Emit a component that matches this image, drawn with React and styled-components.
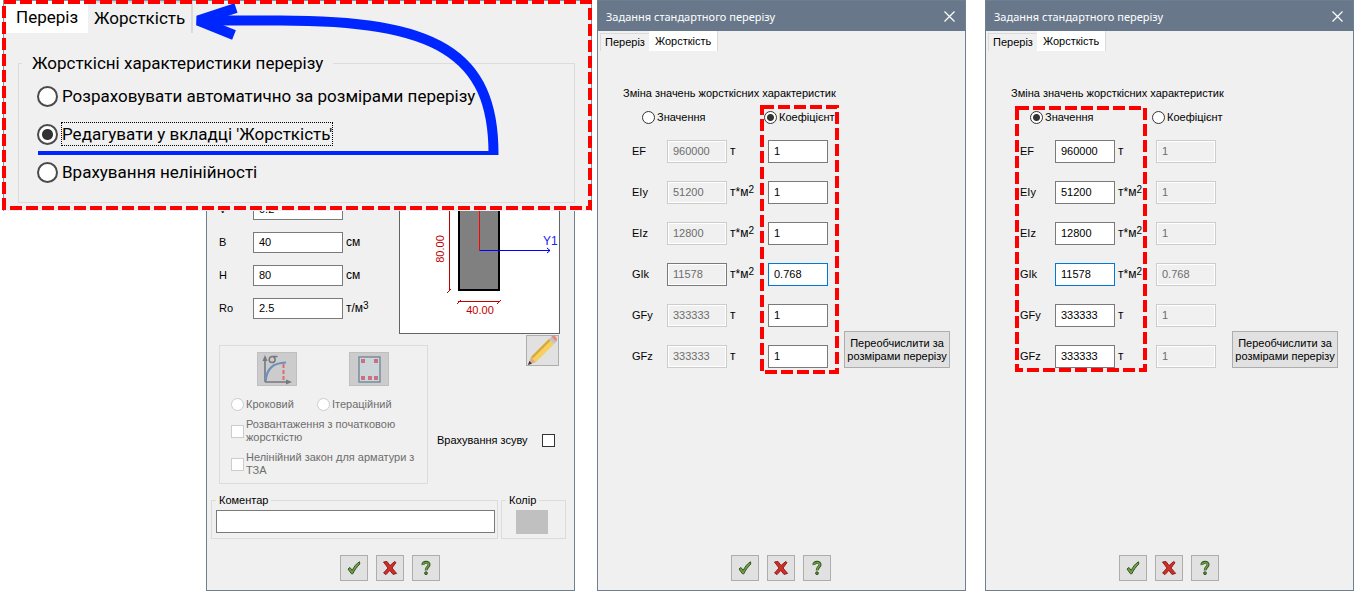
import React, { useState } from "react";
import styled, { createGlobalStyle } from "styled-components";

const ROWS = [
  { name: "EF", value: "960000", unit: "т", factor: "1" },
  { name: "EIy", value: "51200", unit: "т*м", power: "2", factor: "1" },
  { name: "EIz", value: "12800", unit: "т*м", power: "2", factor: "1" },
  { name: "GIk", value: "11578", unit: "т*м", power: "2", factor: "0.768" },
  { name: "GFy", value: "333333", unit: "т", factor: "1" },
  { name: "GFz", value: "333333", unit: "т", factor: "1" },
];

const SECTION = [
  { name: "V", value: "0.2" },
  { name: "B", value: "40", unit: "см" },
  { name: "H", value: "80", unit: "см" },
  { name: "Ro", value: "2.5", unit: "т/м", power: "3" },
];

const CheckIcon = () => (
  <svg width="14" height="14" viewBox="0 0 14 14">
    <path d="M1 8 L3 6.5 L5.2 9.5 C7 5.5 9.5 2.5 12.5 0.8 L12.8 3 C10 5.8 7.6 9 5.8 12.8 L4.5 12.8 Z" fill="#6fa04b" stroke="#35551f" strokeWidth="1" />
  </svg>
);

const CrossIcon = () => (
  <svg width="16" height="16" viewBox="0 0 16 16">
    <path d="M1.5 2 L5 1.5 L8 5.6 L12.6 1.5 L14 2.6 L10 8 L14.6 13.4 L11 14.4 L7.8 10.4 L4 14.6 L1.6 13 L6 8 Z" fill="#cf2f28" stroke="#8e1f1d" strokeWidth="1" />
  </svg>
);

const HelpIcon = () => (
  <svg width="12" height="16" viewBox="0 0 12 16">
    <path d="M3 5 C2.4 1.6 9.6 1.2 9 5 C8.7 7 6 7.4 6.2 10.4" fill="none" stroke="#35551f" strokeWidth="3" />
    <path d="M3 4.8 C2.6 2 9.2 1.6 8.8 5 C8.5 7 6 7.4 6.2 10" fill="none" stroke="#6fa04b" strokeWidth="1.4" />
    <circle cx="6" cy="13.2" r="1.4" fill="#5c8c3c" stroke="#35551f" />
  </svg>
);

const PencilIcon = () => (
  <svg width="31" height="31" viewBox="0 0 31 31">
    <path d="M1 30 L4 22 L9 27 Z" fill="#dcae8c" />
    <path d="M1 30 L2.4 26 L5 28.6 Z" fill="#333" />
    <path d="M4 22 L22 4 L27 9 L9 27 Z" fill="#f6cf5e" />
    <path d="M4 22 L22 4 L23.6 5.6 L5.6 23.6 Z" fill="#d9a63c" />
    <path d="M22 4 L24.4 1.8 L29.2 6.8 L27 9 Z" fill="#b9c6cc" />
    <path d="M24.4 1.8 Q26 0 28.6 1.6 Q31 4 29.2 6.8 Z" fill="#ee8776" />
  </svg>
);

const CurveIcon = () => (
  <svg width="38" height="32" viewBox="0 0 38 32">
    <path d="M7 29 V6 M7 29 H29" stroke="#777782" strokeWidth="1.6" fill="none" />
    <path d="M4.5 8 L7 2 L9.5 8 Z M28 26.5 L34 29 L28 31.5 Z" fill="#777782" />
    <path d="M7.5 28 C9 15 15 10 28 9.5" stroke="#6f8fbd" strokeWidth="2.2" fill="none" />
    <path d="M25.5 11 V28" stroke="#e06a6f" strokeWidth="2" strokeDasharray="4 2" />
    <path d="M19.5 3.5 H14 C10 4 10.5 9.5 14 9.5 C18 9.5 18 5 15 3.5" stroke="#77777a" strokeWidth="1.5" fill="none" />
  </svg>
);

const RebarIcon = () => (
  <svg width="38" height="32" viewBox="0 0 38 32">
    <rect x="9" y="4" width="21" height="25" fill="#ccd6d8" stroke="#71889a" strokeWidth="1.4" />
    <path d="M11 6h4v4h-4z M24 6h4v4h-4z M11 23h4v4h-4z M18 23h4v4h-4z M24 23h4v4h-4z" fill="#cc6f80" />
  </svg>
);

const CloseIcon = () => (
  <svg width="11" height="11" viewBox="0 0 11 11">
    <path d="M0.5 0.5 L10.5 10.5 M10.5 0.5 L0.5 10.5" stroke="#fff" strokeWidth="1.2" />
  </svg>
);

const SectionDrawing = () => (
  <Drawing viewBox="0 0 159 134" width="159" height="134">
    <g fontFamily="Liberation Sans, Arial, sans-serif" fontSize="12">
      <rect x="59" y="-20" width="40" height="111" fill="#808080" stroke="#000" strokeWidth="2" />
      <path d="M79.5 0 V51" stroke="#f00" />
      <path d="M79.5 51.5 H150 M147 49 L150 51.5 L147 54" stroke="#00f" fill="none" />
      <path d="M49.5 0 V92 M47 94 L51 90 M58 102.5 H100 M57 105 L61 101 M97 105 L101 101" stroke="#c00000" fill="none" />
      <text x="143" y="46" fill="#2020ff">Y1</text>
      <text x="80" y="115" textAnchor="middle" fontSize="11" fill="#c00000">40.00</text>
      <text x="44" y="50" textAnchor="middle" fontSize="11" fill="#c00000" transform="rotate(-90 44 50)">80.00</text>
    </g>
  </Drawing>
);

const Footer = () => (
  <Buttons>
    <IconButton aria-label="OK"><CheckIcon /></IconButton>
    <IconButton aria-label="Скасувати"><CrossIcon /></IconButton>
    <IconButton aria-label="Довідка"><HelpIcon /></IconButton>
  </Buttons>
);

const Unit = ({ unit, power }) => (
  <UnitText>
    {unit}
    {power && <sup>{power}</sup>}
  </UnitText>
);

const SectionDialog = () => (
  <Dialog>
    <SectionBody>
      <TopRow>
        <SectionFields>
          {SECTION.map((row) => (
            <React.Fragment key={row.name}>
              <label htmlFor={`section-${row.name}`}>{row.name}</label>
              <TextBox id={`section-${row.name}`} defaultValue={row.value} />
              <Unit unit={row.unit} power={row.power} />
            </React.Fragment>
          ))}
        </SectionFields>
        <Preview>
          <SectionDrawing />
        </Preview>
      </TopRow>
      <MiddleRow>
        <Nonlinear>
          <ModeButtons>
            <ModeButton disabled aria-label="Діаграма"><CurveIcon /></ModeButton>
            <ModeButton disabled aria-label="Армування"><RebarIcon /></ModeButton>
          </ModeButtons>
          <Methods>
            <Choice>
              <Radio name="method" disabled />
              Кроковий
            </Choice>
            <Choice>
              <Radio name="method" disabled />
              Ітераційний
            </Choice>
          </Methods>
          <Choice>
            <CheckBox disabled />
            Розвантаження з початковою жорсткістю
          </Choice>
          <Choice>
            <CheckBox disabled />
            Нелінійний закон для арматури з ТЗА
          </Choice>
        </Nonlinear>
        <SideColumn>
          <PencilButton aria-label="Редагувати"><PencilIcon /></PencilButton>
          <ShearLabel>
            Врахування зсуву
            <CheckBox />
          </ShearLabel>
        </SideColumn>
      </MiddleRow>
      <BottomRow>
        <CommentGroup>
          <legend>Коментар</legend>
          <CommentBox aria-label="Коментар" />
        </CommentGroup>
        <ColorGroup>
          <legend>Колір</legend>
          <Swatch aria-label="Колір" />
        </ColorGroup>
      </BottomRow>
    </SectionBody>
    <Footer />
  </Dialog>
);

const StiffnessDialog = ({ id, initial, children }) => {
  const [mode, setMode] = useState(initial);

  return (
    <Dialog>
      <TitleBar>
        Задання стандартного перерізу
        <CloseButton aria-label="Закрити"><CloseIcon /></CloseButton>
      </TitleBar>
      <Tabs>
        <Tab>Переріз</Tab>
        <Tab $active>Жорсткість</Tab>
      </Tabs>
      <Stiffness>
        <Heading>Зміна значень жорсткісних характеристик</Heading>
        <Modes>
          <Choice>
            <Radio name={id} checked={mode === "value"} onChange={() => setMode("value")} />
            Значення
          </Choice>
          <Choice>
            <Radio name={id} checked={mode === "factor"} onChange={() => setMode("factor")} />
            Коефіцієнт
          </Choice>
        </Modes>
        <FieldsRow>
          <Fields>
            {ROWS.map((row) => (
              <React.Fragment key={row.name}>
                <label htmlFor={`${id}-${row.name}`}>{row.name}</label>
                <TextBox
                  id={`${id}-${row.name}`}
                  defaultValue={row.value}
                  disabled={mode !== "value"}
                  $current={row.name === "GIk"}
                />
                <Unit unit={row.unit} power={row.power} />
                <TextBox
                  aria-label={`${row.name} коефіцієнт`}
                  defaultValue={row.factor}
                  disabled={mode !== "factor"}
                  $current={row.name === "GIk" && mode === "factor"}
                />
              </React.Fragment>
            ))}
          </Fields>
          <Recalculate>
            Переобчислити за
            <br />
            розмірами перерізу
          </Recalculate>
          {children}
        </FieldsRow>
      </Stiffness>
      <Footer />
    </Dialog>
  );
};

const App = () => {
  return (
    <Page>
      <GlobalStyle />
      <SectionDialog />
      <StiffnessDialog id="factor" initial="factor">
        <FactorFrame width="79" height="269">
          <DashedRect x="2" y="2" width="75" height="265" />
        </FactorFrame>
      </StiffnessDialog>
      <StiffnessDialog id="value" initial="value">
        <ValueFrame width="132" height="266">
          <DashedRect x="2" y="2" width="128" height="262" />
        </ValueFrame>
      </StiffnessDialog>
      <Callout>
        <Tabs>
          <BigTab $active>Переріз</BigTab>
          <BigTab>Жорсткість</BigTab>
        </Tabs>
        <BigGroup>
          <legend>Жорсткісні характеристики перерізу</legend>
          <BigChoice>
            <BigRadio name="kind" />
            <span>Розраховувати автоматично за розмірами перерізу</span>
          </BigChoice>
          <BigChoice $focused>
            <BigRadio name="kind" defaultChecked />
            <span>Редагувати у вкладці 'Жорсткість'</span>
          </BigChoice>
          <BigChoice>
            <BigRadio name="kind" />
            <span>Врахування нелінійності</span>
          </BigChoice>
        </BigGroup>
        <CalloutMarks width="592" height="211">
          <path d="M38 153 H494" stroke="#0026ff" strokeWidth="4" />
          <path d="M493.5 155 C494 52 435 20.5 280 20.5 H202" stroke="#0026ff" strokeWidth="10" fill="none" />
          <path d="M236 8 L198 20.5 L234 35" stroke="#0026ff" strokeWidth="10" strokeLinejoin="bevel" fill="none" />
          <DashedRect x="4" y="2" width="586" height="206" />
        </CalloutMarks>
      </Callout>
    </Page>
  );
};

export default App;

const GlobalStyle = createGlobalStyle`
  * {
    box-sizing: border-box;
  }

  body {
    margin: 0;
    background: #fff;
    color: #000;
    font: 11px/13px Tahoma, "Liberation Sans", sans-serif;
  }

  button,
  input {
    margin: 0;
    font: inherit;
  }

  svg {
    display: block;
  }
`;

const Page = styled.main`
  position: relative;
  display: flex;
  gap: 19px;
  padding-left: 206px;
  min-height: 100vh;
`;

const Dialog = styled.section`
  display: flex;
  flex: 1;
  flex-direction: column;
  border: 1px solid #6f7f92;
  background: #f0f0f0;

  &:first-of-type {
    margin-right: 3px;
  }
`;

const TitleBar = styled.header`
  display: flex;
  align-items: center;
  justify-content: space-between;
  height: 30px;
  padding: 0 10px 0 8px;
  background: #69778a;
  color: #fff;
  font-family: "Noto Sans", "Open Sans", sans-serif;
`;

const CloseButton = styled.button`
  padding: 0;
  border: 0;
  background: none;
`;

const Tabs = styled.nav`
  display: flex;
  align-items: flex-end;
  padding-left: 2px;
`;

const Tab = styled.button`
  height: ${(props) => (props.$active ? 20 : 18)}px;
  padding: 0 ${(props) => (props.$active ? 6 : 4)}px;
  border: 1px solid #dadada;
  border-width: ${(props) => (props.$active ? "0 1px 0 0" : "1px 0 0 1px")};
  background: ${(props) => (props.$active ? "#fff" : "#f0f0f0")};
`;

const Stiffness = styled.div`
  padding: 36px 15px 0 25px;
`;

const Heading = styled.div`
  white-space: nowrap;
`;

const Modes = styled.div`
  display: grid;
  grid-template-columns: 122px auto;
  padding: 11px 0 16px 19px;
`;

const Choice = styled.label`
  display: flex;
  align-items: center;
  gap: 2px;

  &:has(:disabled) {
    color: #6d6d6d;
  }
`;

const Radio = styled.input.attrs({ type: "radio" })`
  appearance: none;
  flex: none;
  width: 13px;
  height: 13px;
  border: 1px solid #333;
  border-radius: 50%;
  background: #fff;

  &:checked {
    background: radial-gradient(circle, #333 0 3px, #fff 4px);
  }

  &:disabled {
    border-color: #ccc;
  }
`;

const CheckBox = styled.input.attrs({ type: "checkbox" })`
  appearance: none;
  flex: none;
  width: 13px;
  height: 13px;
  border: 1px solid #333;
  background: #fff;

  &:disabled {
    border-color: #ccc;
  }
`;

const FieldsRow = styled.div`
  position: relative;
  display: flex;
  align-items: flex-end;
  gap: 16px;
  margin-left: 9px;
`;

const Fields = styled.div`
  display: grid;
  grid-template-columns: 35px 60px 41px 60px;
  grid-auto-rows: 23px;
  row-gap: 18px;
  align-items: center;
`;

const TextBox = styled.input`
  width: 100%;
  height: 23px;
  padding: 0 5px 2px;
  border: 1px solid ${(props) => (props.$current ? "#0078d7" : "#7a7a7a")};
  background: #fff;
  color: #000;

  &:disabled {
    border-color: ${(props) => (props.$current ? "#7a7a7a" : "#ccc")};
    box-shadow: inset 0 0 0 1px #fff;
    background: #f0f0f0;
    color: #6d6d6d;
  }
`;

const UnitText = styled.span`
  padding-left: 3px;
  font-size: 12px;
  white-space: nowrap;

  sup {
    font-size: 10px;
    line-height: 0;
    vertical-align: 3px;
  }
`;

const Recalculate = styled.button`
  width: 106px;
  height: 37px;
  padding: 0;
  border: 1px solid #adadad;
  background: #e1e1e1;
  white-space: nowrap;
`;

const Frame = styled.svg`
  position: absolute;
  pointer-events: none;
`;

const FactorFrame = styled(Frame)`
  top: -35px;
  left: 128px;
`;

const ValueFrame = styled(Frame)`
  top: -34px;
  left: -5px;
`;

const DashedRect = styled.rect`
  fill: none;
  stroke: #f00;
  stroke-width: 4px;
  stroke-dasharray: 12 4;
`;

const Buttons = styled.footer`
  display: flex;
  justify-content: center;
  gap: 8px;
  margin-top: auto;
  padding: 9px 2px 9px 0;
`;

const IconButton = styled.button`
  display: flex;
  align-items: center;
  justify-content: center;
  width: 28px;
  height: 26px;
  padding: 0;
  border: 1px solid #adadad;
  background: #e1e1e1;
`;

const SectionBody = styled.div`
  padding: 198px 8px 0 4px;
`;

const TopRow = styled.div`
  display: flex;
  padding: 0 6px 0 8px;
`;

const SectionFields = styled.div`
  display: grid;
  grid-template-columns: 34px 90px 56px;
  grid-auto-rows: 21px;
  row-gap: 12px;
  align-items: center;

  ${TextBox} {
    height: 21px;
  }
`;

const Preview = styled.div`
  flex: 1;
  border: 1px solid #646464;
  border-top: 0;
  background: #fff;
`;

const Drawing = styled.svg`
  overflow: hidden;
`;

const MiddleRow = styled.div`
  display: flex;
  gap: 9px;
  padding: 1px 7px 0 8px;
`;

const Nonlinear = styled.div`
  display: flex;
  flex-direction: column;
  gap: 7px;
  width: 209px;
  height: 139px;
  margin-top: 10px;
  padding: 6px 8px 0 11px;
  border: 1px solid #dcdcdc;
`;

const ModeButtons = styled.div`
  display: flex;
  gap: 52px;
  padding: 0 0 5px 26px;
`;

const Methods = styled.div`
  display: grid;
  grid-template-columns: 86px auto;
`;

const ModeButton = styled.button`
  width: 40px;
  height: 34px;
  padding: 0;
  border: 1px solid #bfbfbf;
  background: #ccc;
`;

const SideColumn = styled.div`
  display: flex;
  flex: 1;
  flex-direction: column;
`;

const PencilButton = styled(IconButton)`
  align-self: flex-end;
  width: 33px;
  height: 31px;
`;

const ShearLabel = styled.label`
  display: flex;
  align-items: center;
  justify-content: space-between;
  margin-top: 68px;
  padding-right: 4px;
  white-space: nowrap;
`;

const BottomRow = styled.div`
  display: flex;
  gap: 3px;
  padding-top: 10px;
`;

const Group = styled.fieldset`
  min-width: 0;
  margin: 0;
  padding: 3px 2px 4px 4px;
  border: 1px solid #dcdcdc;

  legend {
    padding: 0 3px;
  }
`;

const CommentGroup = styled(Group)`
  flex: 1;
`;

const CommentBox = styled(TextBox)`
  display: block;
`;

const ColorGroup = styled(Group)`
  width: 65px;
`;

const Swatch = styled.button`
  display: block;
  width: 32px;
  height: 24px;
  margin-left: 10px;
  border: 0;
  background: #c0c0c0;
`;

const Callout = styled.aside`
  position: absolute;
  top: 0;
  left: 3px;
  width: 589px;
  height: 211px;
  border: 1px solid #8492a5;
  border-bottom: 0;
  background: #f0f0f0;
  font-family: Tahoma, Roboto, sans-serif;
  font-size: 17px;
  line-height: 22px;
`;

const BigTab = styled(Tab)`
  height: 32px;
  padding: 0 ${(props) => (props.$active ? 10 : 6)}px;
  border-width: ${(props) => (props.$active ? 0 : "2px 2px 0 0")};
`;

const BigGroup = styled.fieldset`
  display: flex;
  flex-direction: column;
  gap: 14px;
  height: 151px;
  margin: 19px 16px 0 14px;
  padding: 10px 18px;
  border: 1px solid #dcdcdc;

  legend {
    padding: 0 10px;
    margin-left: -15px;
  }
`;

const BigChoice = styled.label`
  display: flex;
  align-items: center;
  gap: 4px;
  height: 24px;
  white-space: nowrap;

  span {
    outline: ${(props) => (props.$focused ? "1px dotted #000" : "none")};
  }
`;

const BigRadio = styled(Radio)`
  width: 21px;
  height: 21px;
  border: 2px solid #4a4a4a;

  &:checked {
    background: radial-gradient(circle, #333 0 5px, #fff 6px);
  }
`;

const CalloutMarks = styled(Frame)`
  top: -1px;
  left: -4px;
`;
